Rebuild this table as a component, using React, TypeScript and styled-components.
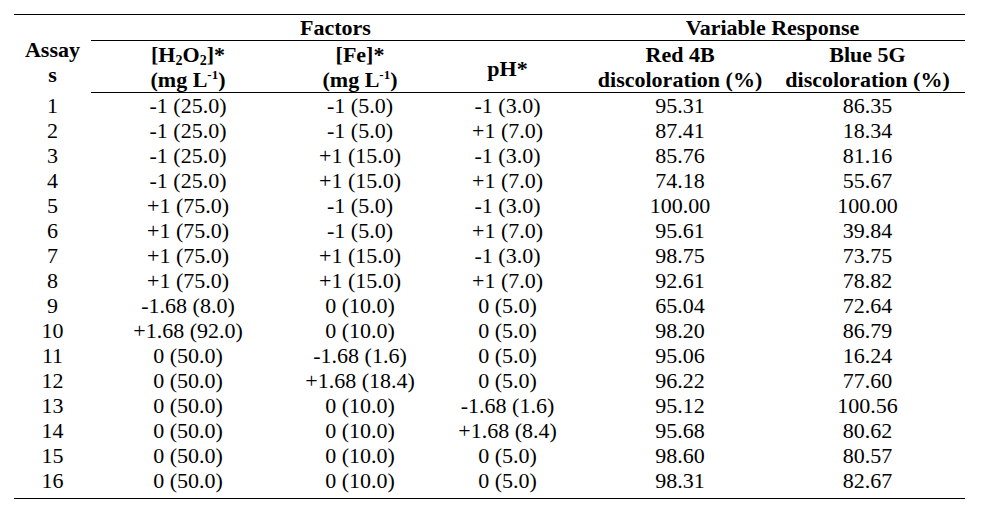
import React from 'react';
import styled, { createGlobalStyle } from 'styled-components';

const GlobalStyle = createGlobalStyle`
  html, body {
    margin: 0;
    padding: 0;
    background: #ffffff;
  }
`;

const Page = styled.div`
  padding: 14px 0 0 14px;
  font-family: 'Liberation Serif', 'Times New Roman', serif;
  color: #000;
`;

const Table = styled.table`
  border-collapse: collapse;
  width: 951px;
  table-layout: fixed;
  font-size: 22px;
  line-height: 25px;
  border-top: 1px solid #000;
  border-bottom: 1px solid #000;
`;

const HeadCell = styled.th<{ $valign?: string; $padTop?: number; $padBottom?: number; $rule?: boolean; $padRight?: number }>`
  font-weight: bold;
  text-align: center;
  white-space: nowrap;
  padding: ${(p) => p.$padTop ?? 0}px ${(p) => p.$padRight ?? 0}px ${(p) => p.$padBottom ?? 0}px 0;
  vertical-align: ${(p) => p.$valign ?? 'middle'};
  border-bottom: ${(p) => (p.$rule ? '1px solid #000' : 'none')};
`;

const Cell = styled.td<{ $padRight?: number; $last?: boolean }>`
  text-align: center;
  white-space: nowrap;
  height: 25px;
  padding: 0 ${(p) => p.$padRight ?? 0}px ${(p) => (p.$last ? 5 : 0)}px 0;
  vertical-align: top;
`;

const HeadRow = styled.tr<{ $height: number }>`
  height: ${(p) => p.$height}px;
`;

const Sub = styled.sub`
  font-size: 14px;
  line-height: 0;
  vertical-align: -3px;
`;

const Sup = styled.sup`
  font-size: 13px;
  line-height: 0;
  vertical-align: 8px;
`;

const widths = [77, 194, 150, 145, 200, 185];

const rows: string[][] = [
  ['1', '-1 (25.0)', '-1 (5.0)', '-1 (3.0)', '95.31', '86.35'],
  ['2', '-1 (25.0)', '-1 (5.0)', '+1 (7.0)', '87.41', '18.34'],
  ['3', '-1 (25.0)', '+1 (15.0)', '-1 (3.0)', '85.76', '81.16'],
  ['4', '-1 (25.0)', '+1 (15.0)', '+1 (7.0)', '74.18', '55.67'],
  ['5', '+1 (75.0)', '-1 (5.0)', '-1 (3.0)', '100.00', '100.00'],
  ['6', '+1 (75.0)', '-1 (5.0)', '+1 (7.0)', '95.61', '39.84'],
  ['7', '+1 (75.0)', '+1 (15.0)', '-1 (3.0)', '98.75', '73.75'],
  ['8', '+1 (75.0)', '+1 (15.0)', '+1 (7.0)', '92.61', '78.82'],
  ['9', '-1.68 (8.0)', '0 (10.0)', '0 (5.0)', '65.04', '72.64'],
  ['10', '+1.68 (92.0)', '0 (10.0)', '0 (5.0)', '98.20', '86.79'],
  ['11', '0 (50.0)', '-1.68 (1.6)', '0 (5.0)', '95.06', '16.24'],
  ['12', '0 (50.0)', '+1.68 (18.4)', '0 (5.0)', '96.22', '77.60'],
  ['13', '0 (50.0)', '0 (10.0)', '-1.68 (1.6)', '95.12', '100.56'],
  ['14', '0 (50.0)', '0 (10.0)', '+1.68 (8.4)', '95.68', '80.62'],
  ['15', '0 (50.0)', '0 (10.0)', '0 (5.0)', '98.60', '80.57'],
  ['16', '0 (50.0)', '0 (10.0)', '0 (5.0)', '98.31', '82.67'],
];

function App() {
  return (
    <Page>
      <GlobalStyle />
      <Table>
        <colgroup>
          {widths.map((w, i) => (
            <col key={i} style={{ width: w }} />
          ))}
        </colgroup>
        <thead>
          <HeadRow $height={26}>
            <HeadCell rowSpan={2} $valign='bottom' $padBottom={6}>
              Assay<br />s
            </HeadCell>
            <HeadCell colSpan={3} $rule>Factors</HeadCell>
            <HeadCell colSpan={2} $rule>Variable Response</HeadCell>
          </HeadRow>
          <HeadRow $height={52}>
            <HeadCell $rule>
              [H<Sub>2</Sub>O<Sub>2</Sub>]*<br />(mg L<Sup>-1</Sup>)
            </HeadCell>
            <HeadCell $rule>
              [Fe]*<br />(mg L<Sup>-1</Sup>)
            </HeadCell>
            <HeadCell $rule $padTop={4}>pH*</HeadCell>
            <HeadCell $rule>
              Red 4B<br />discoloration (%)
            </HeadCell>
            <HeadCell $rule $padRight={10}>
              Blue 5G<br />discoloration (%)
            </HeadCell>
          </HeadRow>
        </thead>
        <tbody>
          {rows.map((r, ri) => (
            <tr key={ri}>
              {r.map((v, ci) => (
                <Cell key={ci} $padRight={ci === 5 ? 10 : 0} $last={ri === rows.length - 1}>
                  {v}
                </Cell>
              ))}
            </tr>
          ))}
        </tbody>
      </Table>
    </Page>
  );
}

export default App;
